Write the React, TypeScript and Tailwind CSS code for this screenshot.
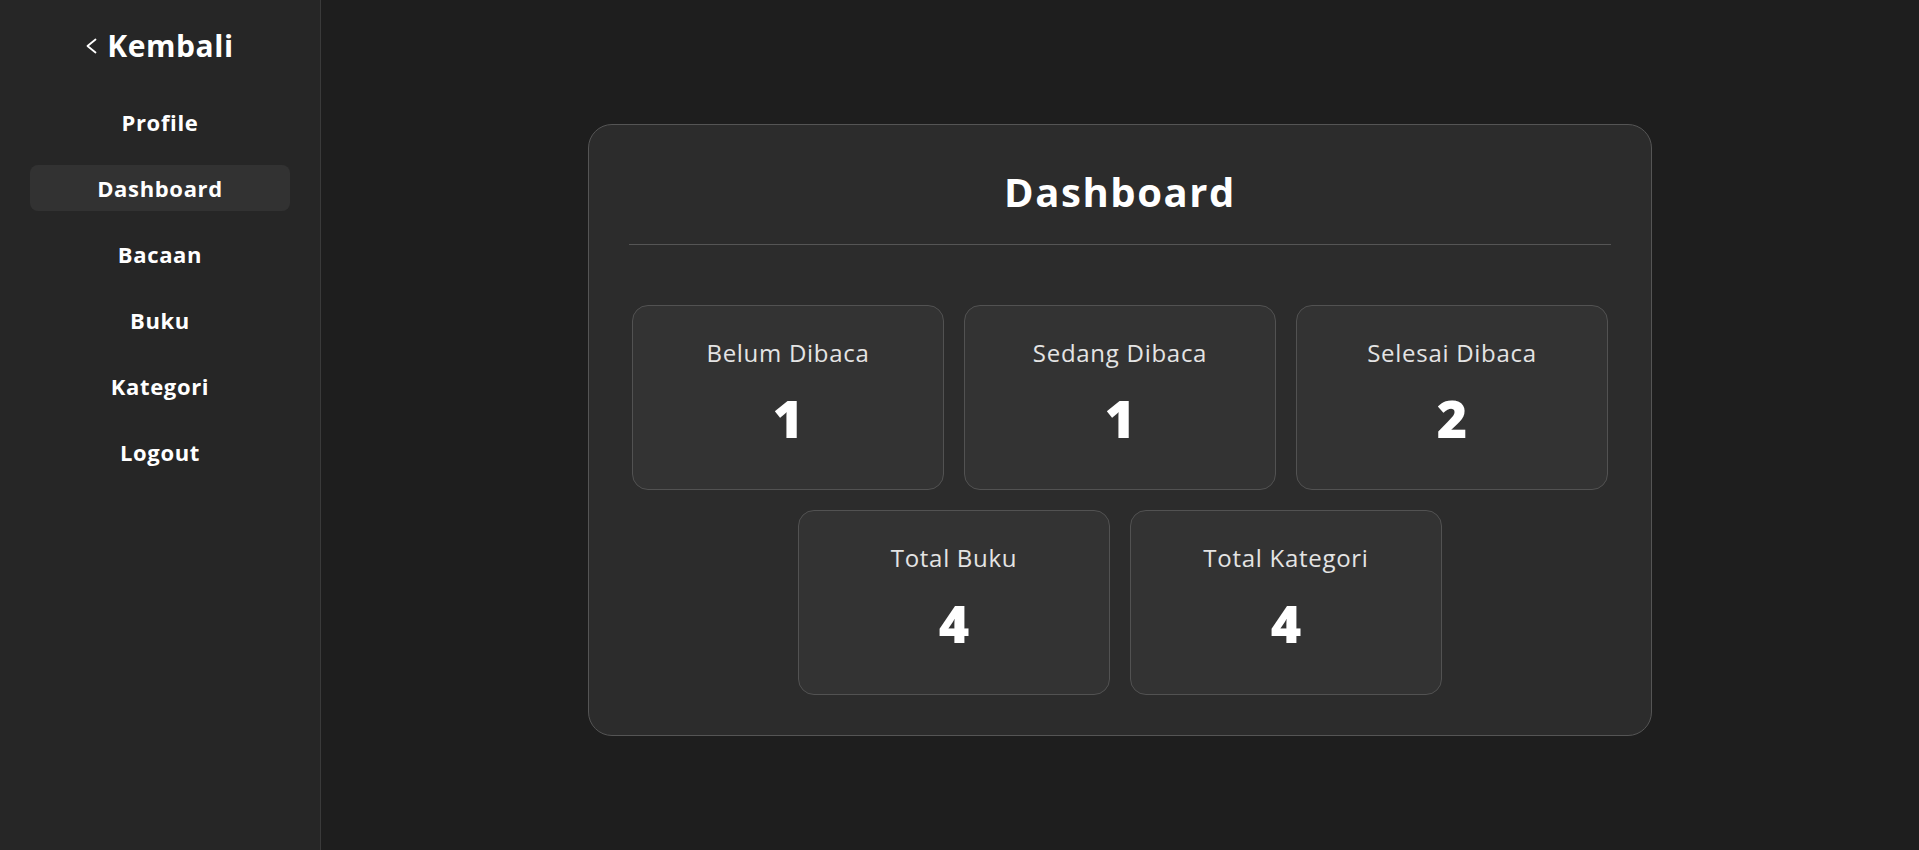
import clsx from "clsx";

const navItems = [
  { label: "Profile" },
  { label: "Dashboard", active: true },
  { label: "Bacaan" },
  { label: "Buku" },
  { label: "Kategori" },
  { label: "Logout" },
];

const stats = [
  { label: "Belum Dibaca", value: 1 },
  { label: "Sedang Dibaca", value: 1 },
  { label: "Selesai Dibaca", value: 2 },
  { label: "Total Buku", value: 4 },
  { label: "Total Kategori", value: 4 },
];

function StatCard({ label, value }: { label: string; value: number }) {
  return (
    <div className="flex h-[185px] w-[312px] flex-col items-center rounded-2xl border border-[#525252] bg-[#333333] pt-[33px]">
      <p className="text-[24px] leading-[28px] tracking-[0.03em] text-[#e4e4e4]">{label}</p>
      <p className="mt-[21px] text-[52px] font-extrabold leading-[60px] text-white">{value}</p>
    </div>
  );
}

export default function App() {
  return (
    <div className="flex min-h-screen bg-[#1e1e1e] font-['Open_Sans',sans-serif] text-white">
      {/* Sidebar */}
      <aside className="w-[321px] shrink-0 border-r border-[#3a3a3a] bg-[#262626] px-[30px] pt-[23px]">
        <a href="#" className="flex h-[45px] items-center justify-center gap-[10px]">
          <svg width="11" height="16" viewBox="0 0 11 16" fill="none" stroke="white" strokeWidth="1.8" strokeLinecap="round" strokeLinejoin="round">
            <polyline points="9.5,1.5 1.5,8 9.5,14.5" />
          </svg>
          <span className="text-[30px] font-bold leading-[45px] tracking-[0.02em]">Kembali</span>
        </a>
        <nav className="mt-[31px] flex flex-col gap-5">
          {navItems.map((item) => (
            <a
              key={item.label}
              href="#"
              className={clsx(
                "flex h-[46px] items-center justify-center rounded-lg text-[22px] font-bold tracking-[0.03em]",
                item.active && "bg-[#323232]"
              )}
            >
              {item.label}
            </a>
          ))}
        </nav>
      </aside>

      {/* Main */}
      <main className="flex flex-1 justify-center pt-[124px]">
        <section className="h-fit w-[1064px] rounded-3xl border border-[#555555] bg-[#2c2c2c] px-10 pb-10 pt-[43px]">
          <h1 className="text-center text-[40px] font-bold leading-[48px] tracking-[0.04em]">Dashboard</h1>
          <div className="mt-[28px] h-px bg-[#555555]" />
          <div className="mt-[60px] flex flex-wrap justify-center gap-5">
            {stats.map((s) => (
              <StatCard key={s.label} label={s.label} value={s.value} />
            ))}
          </div>
        </section>
      </main>
    </div>
  );
}
